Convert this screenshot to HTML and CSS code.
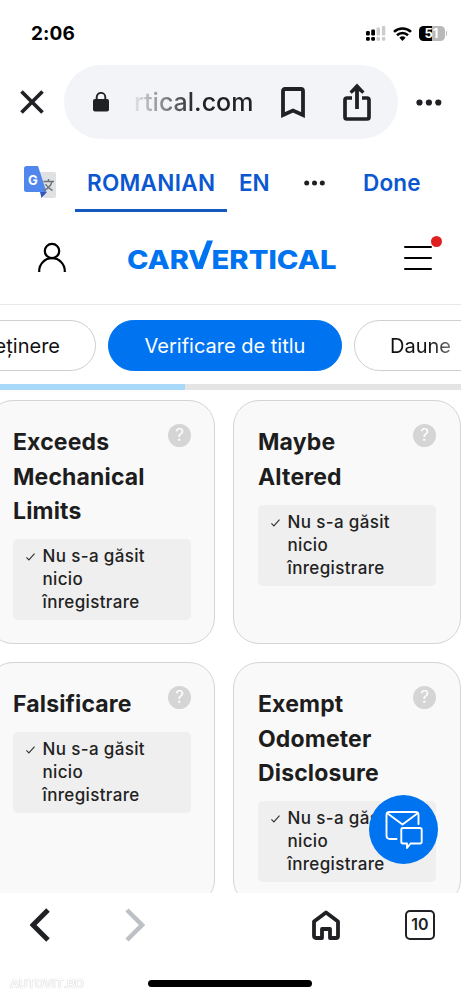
FILE: index.html
```html
<!DOCTYPE html>
<html lang="ro">
<head>
<meta charset="utf-8">
<title>carVertical</title>
<link rel="stylesheet" href="styles.css">
</head>
<body>
<div class="phone">
  <header class="status">
    <span class="clock">2:06</span>
    <div class="status-icons">
      <svg class="signal" width="20" height="15" viewBox="0 0 20 15"><g fill="#000"><rect x="0" y="5" width="3.800" height="4.500" rx="1.200"/><rect x="5.200" y="3.500" width="3.800" height="6" rx="1.200"/><rect x="0" y="11" width="3.800" height="3.800" rx="1.200"/><rect x="5.200" y="11" width="3.800" height="3.800" rx="1.200"/></g><g fill="#ccc"><rect x="10.600" y="1.500" width="3.400" height="8" rx="1"/><rect x="15.900" y="0" width="3.400" height="9.500" rx="1"/><rect x="10.600" y="11" width="3.400" height="3.800" rx="1.200"/><rect x="15.900" y="11" width="3.400" height="3.800" rx="1.200"/></g></svg>
      <svg class="wifi" width="19" height="14" viewBox="0 0 19 14"><g fill="none" stroke="#000" stroke-width="2.600"><path d="M1 4.900a12.300 12.300 0 0 1 17 0"/><path d="M4 8.200a8 8 0 0 1 11 0"/></g><path d="M6.400 10.700a4.500 4.500 0 0 1 6.200 0L9.500 14z"/></svg>
      <div class="battery"><span>51</span></div><i class="battery-tip"></i>
    </div>
  </header>

  <div class="toolbar">
    <svg class="close" width="24" height="24" viewBox="0 0 24 24"><path d="M1.500 1.500l21 21M22.500 1.500l-21 21" stroke="#202124" stroke-width="3.700"/></svg>
    <div class="address">
      <svg class="lock" width="16" height="20" viewBox="0 0 16 20"><rect y="7" width="16" height="12.500" rx="2" fill="#202124"/><path d="M3.700 8V5.200a4.300 4.300 0 0 1 8.600 0V8" fill="none" stroke="#202124" stroke-width="1.900"/></svg>
      <span class="url">rtical.com</span>
      <svg class="bookmark" width="24" height="31" viewBox="0 0 24 31"><path d="M2 28V4q0-2 2-2h16q2 0 2 2v24l-10-4.500z" fill="none" stroke="#202124" stroke-width="3.800"/></svg>
      <svg class="share" width="28" height="38" viewBox="0 0 28 38"><path d="M9 15H4q-2 0-2 2v17q0 2 2 2h20q2 0 2-2V17q0-2-2-2h-5" fill="none" stroke="#202124" stroke-width="3.700"/><path d="M14 26V5" stroke="#202124" stroke-width="3.800"/><path d="M14 .5l7.500 8-2.200 2.300L14 6.500l-5.300 4.300-2.200-2.300z" fill="#202124"/></svg>
    </div>
    <svg class="more" width="26" height="7" viewBox="0 0 26 7"><g fill="#202124"><circle cx="3.500" cy="3.500" r="3.100"/><circle cx="12.900" cy="3.500" r="3.100"/><circle cx="22.300" cy="3.500" r="3.100"/></g></svg>
  </div>

  <div class="translate">
    <svg class="gt" width="33" height="33" viewBox="0 0 33 33"><path d="M12 6h18q2 0 2 2v22q0 2-2 2H20z" fill="#e0e1e3"/><path d="M16 26h7l-5.500 6z" fill="#3456b8"/><path d="M2.500 0H14l8.500 26H2.500Q0 26 0 23.500v-21Q0 0 2.500 0z" fill="#4f87ec"/><g fill="none" stroke="#697179" stroke-width="1.400"><path d="M19.500 15.500H30M24.500 13v2.500M28 15.500q-1.500 6-8 9M21.500 18q2.500 4.500 7 6.500"/></g><text x="4" y="18.500" class="gt-letter">G</text></svg>
    <div class="lang active"><span>ROMANIAN</span></div>
    <div class="lang english"><span>EN</span></div>
    <svg class="dots" width="21" height="6" viewBox="0 0 21 6"><g fill="#202124"><circle cx="2.700" cy="3" r="2.500"/><circle cx="10.500" cy="3" r="2.500"/><circle cx="18.300" cy="3" r="2.500"/></g></svg>
    <span class="done">Done</span>
  </div>

  <div class="site-head">
    <svg class="user" width="28" height="31" viewBox="0 0 28 31"><g fill="none" stroke="#000" stroke-width="2.200"><circle cx="14" cy="9" r="7.200"/><path d="M1.200 30v-1a12.800 12.800 0 0 1 25.600 0v1"/></g></svg>
    <svg class="logo" width="212" height="44" viewBox="0 -6 212 44"><g class="logo-text"><text x="1" y="30" textLength="62" lengthAdjust="spacingAndGlyphs">CAR</text><text x="62" y="30" textLength="21.500" lengthAdjust="spacingAndGlyphs">V</text><text x="85.500" y="30" textLength="125" lengthAdjust="spacingAndGlyphs">ERTICAL</text></g><path d="M70 30L81 1.500h6L76.500 30z" fill="#0073f0"/></svg>
    <div class="menu"><i></i><i></i><i></i><b class="dot"></b></div>
  </div>

  <nav class="chips">
    <div class="chip left"><span>Deținere</span></div>
    <div class="chip selected"><span>Verificare de titlu</span></div>
    <div class="chip right"><span>Daune</span></div>
  </nav>
  <div class="progress"><div class="bar"></div></div>

  <main class="cards">
    <section class="card first">
      <h2>Exceeds Mechanical Limits</h2><i class="help">?</i>
      <div class="note"><svg width="9" height="8" viewBox="0 0 9 8"><path d="M.4 4.300l2.500 2.600L8.500.6"/></svg><p>Nu s-a găsit nicio înregistrare</p></div>
    </section>
    <section class="card">
      <h2>Maybe Altered</h2><i class="help">?</i>
      <div class="note"><svg width="9" height="8" viewBox="0 0 9 8"><path d="M.4 4.300l2.500 2.600L8.500.6"/></svg><p>Nu s-a găsit nicio înregistrare</p></div>
    </section>
    <section class="card first">
      <h2>Falsificare</h2><i class="help">?</i>
      <div class="note"><svg width="9" height="8" viewBox="0 0 9 8"><path d="M.4 4.300l2.500 2.600L8.500.6"/></svg><p>Nu s-a găsit nicio înregistrare</p></div>
    </section>
    <section class="card">
      <h2>Exempt Odometer Disclosure</h2><i class="help">?</i>
      <div class="note"><svg width="9" height="8" viewBox="0 0 9 8"><path d="M.4 4.300l2.500 2.600L8.500.6"/></svg><p>Nu s-a găsit nicio înregistrare</p></div>
    </section>
    <div class="chat"><svg width="38" height="38" viewBox="0 0 38 38"><g fill="none" stroke="#fff" stroke-width="1.900" stroke-linejoin="round" stroke-linecap="round"><path d="M11.500 28H5q-3.500 0-3.500-3.500V4Q1.500 1 4.500 1h26q3 0 3 3v9"/><path d="M2 2l15.500 11.500L33 2"/><path d="M18 17h17q1.700 0 1.700 1.700v12.100q0 1.700-1.700 1.700h-9.500L22 37v-4.500h-4q-1.700 0-1.700-1.700V18.700Q16.300 17 18 17z"/></g></svg></div>
  </main>

  <footer class="browser-nav">
    <div class="nav-icons">
      <svg class="back" width="20" height="34" viewBox="0 0 20 34"><path d="M18 2L3 17l15 15" fill="none" stroke="#202124" stroke-width="5"/></svg>
      <svg class="forward" width="20" height="34" viewBox="0 0 20 34"><path d="M2 2l15 15L2 32" fill="none" stroke="#bdc1c6" stroke-width="4.500"/></svg>
      <svg class="home" width="28" height="30" viewBox="0 0 28 30"><path d="M2 11.500L14 2.500l12 9V26q0 2-2 2h-6v-9h-8v9H4q-2 0-2-2z" fill="none" stroke="#202124" stroke-width="3.800" stroke-linejoin="round"/></svg>
      <div class="tabs">10</div>
    </div>
    <div class="foot"><span class="mark">AUTOVIT.RO</span><i class="home-bar"></i></div>
  </footer>
</div>
</body>
</html>
```
FILE: styles.css
```css
* { box-sizing: border-box; }
body { margin: 0; background: #fff; font-family: Inter, "Liberation Sans", sans-serif; color: #202124; }
svg { display: block; flex: none; }
.phone { width: 461px; height: 998px; overflow: hidden; display: flex; flex-direction: column; background: #fff; }
.phone > * { flex: none; }

.status { height: 65px; padding: 0 14px 0 31px; display: flex; align-items: center; justify-content: space-between; }
.clock { font-size: 19px; font-weight: 700; color: #000; letter-spacing: .1px; margin-top: 2px; }
.status-icons { display: flex; align-items: center; margin-top: 2px; }
.wifi { margin-left: 7px; }
.battery { margin-left: 7px; width: 26px; height: 15px; border-radius: 4.500px; background: linear-gradient(90deg, #000 51%, #b9b9b9 51%); color: #fff; font-size: 13px; font-weight: 700; line-height: 15px; text-align: center; }
.battery-tip { width: 1.500px; height: 5px; margin-left: 1px; background: #bbb; border-radius: 0 2px 2px 0; }

.toolbar { height: 74px; display: flex; align-items: center; padding-left: 20px; }
.address { width: 334px; height: 74px; margin-left: 20px; padding-left: 29px; border-radius: 37px; background: #f2f4f7; display: flex; align-items: center; }
.url { width: 121px; margin-left: 25px; font-size: 25px; font-weight: 500; white-space: nowrap; color: transparent; background: linear-gradient(90deg, #e2e3e5 0, #202124 62px); -webkit-background-clip: text; background-clip: text; }
.bookmark { margin-left: 26px; }
.share { margin-left: 38px; }
.more { margin-left: 18px; }

.translate { height: 73px; display: flex; align-items: center; padding-left: 24px; color: #0b57d0; font-size: 22.500px; font-weight: 600; }
.gt { margin-top: 14px; }
.gt-letter { font: 700 13px Inter, sans-serif; fill: #fff; }
.lang { height: 73px; line-height: 87px; white-space: nowrap; }
.lang.active { width: 152px; margin-left: 18px; padding-left: 12px; border-bottom: 3px solid #1558c0; letter-spacing: .3px; }
.lang.english { width: 32px; margin-left: 12px; }
.dots { margin: 14px 0 0 33px; }
.done { margin: 14px 0 0 38px; letter-spacing: .2px; }

.site-head { height: 93px; border-bottom: 1px solid #e9e9e9; display: flex; align-items: center; padding-left: 38px; }
.user { margin-top: -2px; }
.logo { margin: -6px 0 0 60px; }
.logo-text { font: 800 26px Inter, sans-serif; fill: #0073f0; }
.menu { position: relative; width: 28px; height: 24px; margin-left: 66px; display: flex; flex-direction: column; justify-content: space-between; }
.menu i { height: 2px; background: #000; border-radius: 1px; }
.dot { position: absolute; width: 11px; height: 11px; border-radius: 50%; background: #e02020; right: -10px; top: -10px; }

.chips { height: 79px; padding-top: 15px; display: flex; gap: 12px; overflow: hidden; }
.chip { flex: none; height: 51px; border: 1px solid #cfcfcf; border-radius: 26px; display: flex; align-items: center; font-size: 20px; color: #111; white-space: nowrap; }
.chip.left { width: 136px; margin-left: -40px; justify-content: flex-end; padding-right: 35px; }
.chip.selected { width: 234px; justify-content: center; background: #0073f0; border-color: #0073f0; color: #fff; }
.chip.right { width: 140px; padding-left: 35px; }
.chip.right span { color: transparent; background: linear-gradient(90deg, #111 65%, #777); -webkit-background-clip: text; background-clip: text; }
.progress { height: 6px; background: #e4e4e4; }
.bar { width: 185px; height: 6px; background: #a8d8fa; }

.cards { position: relative; height: 503px; padding-top: 10px; overflow: hidden; display: grid; grid-template-columns: 228px 228px; grid-template-rows: 244px 244px; gap: 18px; margin-left: -13px; }
.card { display: grid; grid-template-columns: 1fr 23px; align-content: start; background: #f9f9f9; border: 1.500px solid #d5d5d5; border-radius: 26px; padding: 23px 24px 0 24px; }
.card.first { padding: 23px 23px 0 25px; }
h2 { margin: 1px 0 0; font-size: 23px; line-height: 34.600px; font-weight: 700; letter-spacing: .15px; color: #1d1d1d; }
.help { width: 23px; height: 23px; border-radius: 50%; background: #d5d5d5; color: #fff; font-style: normal; font-size: 17px; line-height: 23px; text-align: center; }
.note { grid-column: 1 / 3; margin-top: 10.500px; height: 81px; padding: 6px 0 0 13px; border-radius: 5px; background: #efefef; display: flex; gap: 7.500px; }
.note svg { margin-top: 8px; }
.note path { fill: none; stroke: #333; stroke-width: 1.100; }
.note p { margin: 0; width: 118px; font-size: 17px; line-height: 23px; font-weight: 500; letter-spacing: .35px; color: #222; }
.chat { position: absolute; left: 382px; top: 405px; width: 69px; height: 69px; border-radius: 50%; background: #0073f0; display: flex; align-items: center; justify-content: center; }

.browser-nav { height: 105px; background: #fff; }
.nav-icons { height: 63px; display: flex; align-items: center; padding-left: 30px; }
.forward { margin-left: 75px; }
.home { margin-left: 167px; }
.tabs { width: 30px; height: 30px; margin-left: 65px; border: 2.500px solid #202124; border-radius: 5px; font-size: 16px; font-weight: 600; line-height: 25px; text-align: center; }
.foot { height: 42px; display: flex; align-items: center; padding: 13px 0 0 10px; }
.mark { width: 138px; font-size: 12px; font-weight: 600; color: #fff; text-shadow: 0 0 1px #aaa; }
.home-bar { width: 164px; height: 7px; border-radius: 4px; background: #000; margin-top: -1px; }
```
